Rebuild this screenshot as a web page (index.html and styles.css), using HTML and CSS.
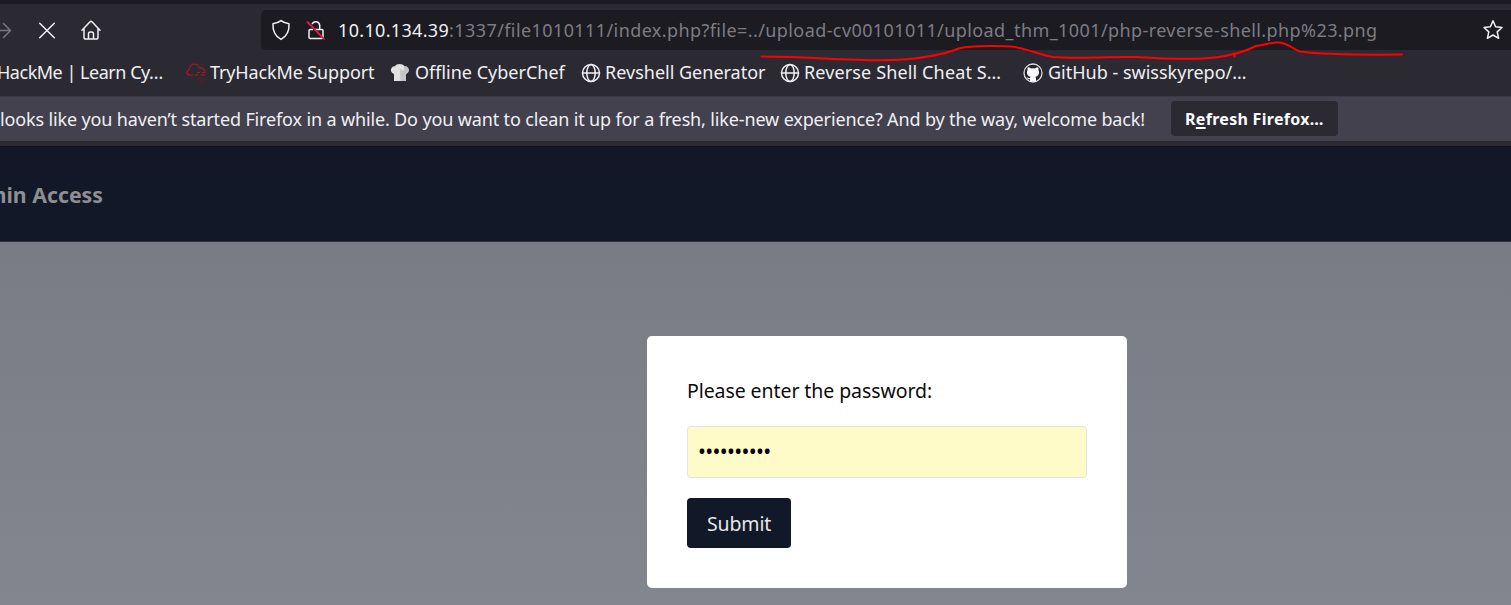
FILE: index.html
```
<!DOCTYPE html>
<html lang="en">
<head>
<meta charset="utf-8">
<title>Admin Access</title>
<link rel="stylesheet" href="styles.css">
</head>
<body>
<div class="tabstrip"></div>
<div class="toolbar">
  <svg class="icon forward" width="14" height="20" viewBox="0 0 14 20"><path d="M0 10.5H10M3.5 3.5l7 7-7 7"/></svg>
  <svg class="icon stop" width="20" height="20" viewBox="0 0 20 20"><path d="M2.7 3.2l14.6 14.6M17.3 3.2L2.7 17.8"/></svg>
  <svg class="icon home" width="20" height="20" viewBox="0 0 20 20"><path d="M1 10.2L8.8 2a1.7 1.7 0 0 1 2.4 0L19 10.2M3 8.8v8.400q0 1.800 1.800 1.800h10.400q1.800 0 1.800-1.800V8.800M7.500 19v-5.200q0-1.800 1.800-1.800h1.400q1.800 0 1.800 1.800V19"/></svg>
  <div class="urlbar">
    <svg class="icon shield" width="20" height="22" viewBox="0 0 20 22"><path d="M10 1.600c2.200 1.800 4.900 2.600 8 3.100.4 6.400-1.600 12.100-8 15.700C3.600 16.800 1.600 11.100 2 4.700c3.100-.5 5.800-1.300 8-3.100z"/></svg>
    <svg class="icon lock" width="20" height="22" viewBox="0 0 20 22"><path d="M6.500 10.500H4.300q-1.300 0-1.300 1.300v6.400q0 1.300 1.300 1.300h11.400q1.300 0 1.300-1.300v-6.400q0-1.300-1.300-1.300H9.500M13.700 10.500V6.300a4 4 0 0 0-7.400-1.600"/><path class="slash" d="M1.500 3L18 19.800"/></svg>
    <span class="url"><span class="host">10.10.134.39</span><span class="path">:1337/file1010111/index.php?file=../upload-cv00101011/upload_thm_1001/php-reverse-shell.php%23.png</span></span>
    <svg class="icon star" width="22" height="22" viewBox="0 0 22 22"><path d="M11 1.800l2.600 6 6.400.7-4.800 4.400 1.400 6.400-5.600-3.300-5.600 3.300 1.400-6.400L2 8.500l6.400-.7z"/></svg>
  </div>
</div>
<div class="bookmarks">
  <div class="mark mark-first"><span class="label">HackMe | Learn Cy…</span></div>
  <div class="mark mark-thm">
    <svg width="20" height="20" viewBox="0 0 20 20" fill="none" stroke="#b0151c" stroke-width="1.2"><path d="M8 12H3.500C.2 12-.1 7.400 3.200 6.800 3.500 4 4.500 1.200 8 1c3-.1 4.700 1.600 5.200 3.900 3.300-.5 5.900 1.200 5.800 3.900"/><path d="M11 9.500h3m2 0h3.500M9 11.800h3m3 0h4"/><path stroke="#78141c" d="M10.500 15.500h6m-2 2.500h3M14 19.500h2"/></svg>
    <span class="label">TryHackMe Support</span>
  </div>
  <div class="mark mark-chef">
    <svg width="20" height="20" viewBox="0 0 20 20"><path fill="#e2e2e2" d="M4 18V11C-.7 9.500.2 3 5 3.200 6.500.5 12.500.3 14.500 3.200c5-.4 6 6 1.500 7.800v7z"/><path fill="#b5b5b5" d="M10 6l.5 12H16v-7c4.500-1.800 3.500-8.200-1.500-7.800L13.500 8z" opacity=".65"/></svg>
    <span class="label">Offline CyberChef</span>
  </div>
  <div class="mark mark-rev">
    <svg class="icon" width="20" height="20" viewBox="0 0 20 20"><circle cx="10" cy="10" r="8.500"/><ellipse cx="10" cy="10" rx="4.200" ry="8.500"/><path d="M1.500 10h17"/></svg>
    <span class="label">Revshell Generator</span>
  </div>
  <div class="mark mark-cheat">
    <svg class="icon" width="20" height="20" viewBox="0 0 20 20"><circle cx="10" cy="10" r="8.500"/><ellipse cx="10" cy="10" rx="4.200" ry="8.500"/><path d="M1.500 10h17"/></svg>
    <span class="label">Reverse Shell Cheat S…</span>
  </div>
  <div class="mark mark-git">
    <svg width="20" height="20" viewBox="0 0 20 20"><circle cx="10" cy="10" r="9" fill="#24232b" stroke="#dcdce0" stroke-width="1.3"/><path fill="#fbfbfe" d="M4.800 4.200q2 .1 3.200 1.200 2-.5 4 0 1.200-1.100 3.200-1.200.6 1.500.2 2.800c1.600 3 .2 6.200-3.100 6.800q.7.700.7 2V18.500H7V16.200c-2 .4-2.600-.8-3.500-2 1.300-.1 1.900 1.200 3.500.9q.1-.8.700-1.300C4.400 13.200 3 10 4.600 7q-.4-1.300.2-2.800z"/></svg>
    <span class="label">GitHub - swisskyrepo/…</span>
  </div>
</div>
<div class="notice">
  <span class="notice-text">looks like you haven’t started Firefox in a while. Do you want to clean it up for a fresh, like-new experience? And by the way, welcome back!</span>
  <button class="refresh"><span class="refresh-label">R<span class="key">e</span>fresh Firefox…</span></button>
</div>
<div class="chrome-edge"></div>
<header class="site-header"><span class="brand">Admin Access</span></header>
<main class="content">
  <form class="card">
    <label class="prompt" for="password"><span class="prompt-text">Please enter the password:</span></label>
    <div class="field" id="password"><span class="dots">••••••••••</span></div>
    <button class="submit" type="button"><span class="submit-label">Submit</span></button>
  </form>
</main>
<svg class="scribble" width="650" height="24" viewBox="760 40 650 24"><path d="M761.500 56.500C800 56.500 845 60.300 880 60.300C905 60 925 58 940 54C949 53 955 49 963 47.500C975 45.500 1003 45.500 1015 47C1028 49 1040 55 1053 57C1075 59 1105 56.500 1135 57C1160 58.500 1195 60 1215 57.500C1235 55 1248 50 1256 46C1265 44.500 1270 43 1277 42.500C1288 42 1292 49 1300 51.500C1315 53.500 1355 55 1402 54.500M1234.500 54v2.500"/></svg>
</body>
</html>
```
FILE: styles.css
```
* { box-sizing: border-box; }
body {
  margin: 0;
  width: 1511px;
  height: 605px;
  overflow: hidden;
  display: flex;
  flex-direction: column;
  position: relative;
  background: #2b2a33;
  color: #f0f0f4;
  font-family: "Noto Sans", "Open Sans", sans-serif;
  font-size: 18px;
}
svg { display: block; flex: none; }
button { border: 0; font-family: inherit; }
.icon { fill: none; stroke: #f0f0f4; stroke-width: 1.5; stroke-linecap: round; stroke-linejoin: round; }

.tabstrip { height: 4px; background: #1c1b22; }
.toolbar { height: 51px; display: flex; align-items: center; padding-top: 1px; }
.toolbar .forward { stroke: #77767d; }
.stop { margin-left: 23px; }
.home { margin-left: 24px; }
.urlbar {
  flex: 1;
  height: 40px;
  margin-left: 160px;
  padding-left: 10px;
  display: flex;
  align-items: center;
  background: #1c1b22;
  border-radius: 5px 0 0 5px;
}
.lock { margin-left: 15px; }
.slash { stroke: #e2194a; stroke-width: 1.8; }
.url { width: 1144px; margin-left: 12px; white-space: nowrap; line-height: 24px; }
.host { letter-spacing: .33px; }
.path { color: #7d7c84; letter-spacing: .41px; }

.bookmarks { height: 41px; display: flex; align-items: flex-start; padding-top: 5px; line-height: 24px; white-space: nowrap; }
.mark { display: flex; align-items: center; gap: 4px; }
.mark svg { position: relative; top: 1px; }
.mark-first { width: 186px; margin-left: -3px; letter-spacing: -.48px; }
.mark-first + .mark { margin-left: 3px; }
.mark-thm { width: 204px; letter-spacing: -.13px; }
.mark-chef { width: 191px; gap: 5px; }
.mark-rev { width: 199px; }
.mark-cheat { width: 243px; letter-spacing: .13px; }
.mark-git { width: 230px; gap: 5px; }

.notice {
  height: 45px;
  display: flex;
  align-items: center;
  padding-bottom: 1px;
  background: #42414d;
  border-top: 1px solid #3b3a45;
  white-space: nowrap;
}
.notice-text { width: 1171px; line-height: 24px; letter-spacing: -.142px; }
.refresh {
  width: 167px;
  height: 35px;
  padding: 0 0 0 14px;
  border-radius: 4px;
  background: #2b2a33;
  color: #fbfbfe;
  font-size: 16px;
  font-weight: 700;
  letter-spacing: .3px;
  text-align: left;
  white-space: nowrap;
}
.key { text-decoration: underline; text-decoration-thickness: 2px; text-underline-offset: 2px; text-decoration-skip-ink: none; }
.chrome-edge { height: 6px; border-bottom: 1px solid #111117; }

.site-header {
  height: 95px;
  display: flex;
  align-items: center;
  background: #121827;
  border-bottom: 1px solid #2f3541;
}
.brand { width: 103px; display: flex; justify-content: flex-end; white-space: nowrap; color: #8e8f93; font-size: 21.3px; font-weight: 700; }
.content {
  flex: 1;
  padding: 94px 0 0 647px;
  background: linear-gradient(#797c84, #83868e);
}
.card {
  width: 480px;
  height: 252px;
  padding: 40px;
  border-radius: 5px;
  background: #fff;
  color: #0b0b0d;
  font-size: 19.5px;
}
.prompt { display: block; height: 50px; line-height: 30px; letter-spacing: -.08px; white-space: nowrap; }
.field {
  height: 52px;
  padding: 0 10px 2px;
  display: flex;
  align-items: center;
  border: 1px solid #e2e3ea;
  border-radius: 4px;
  background: #fffbc8;
  color: #000;
}
.dots { font-size: 21px; letter-spacing: -.65px; }
.submit {
  width: 104px;
  height: 50px;
  margin-top: 20px;
  padding: 0 0 0 20px;
  border-radius: 4px;
  background: #111827;
  color: #e5e6e8;
  font-size: 19.5px;
  letter-spacing: -.15px;
  text-align: left;
}
.scribble { position: absolute; left: 760px; top: 40px; fill: none; stroke: #f00; stroke-width: 2; stroke-linecap: round; }
```
